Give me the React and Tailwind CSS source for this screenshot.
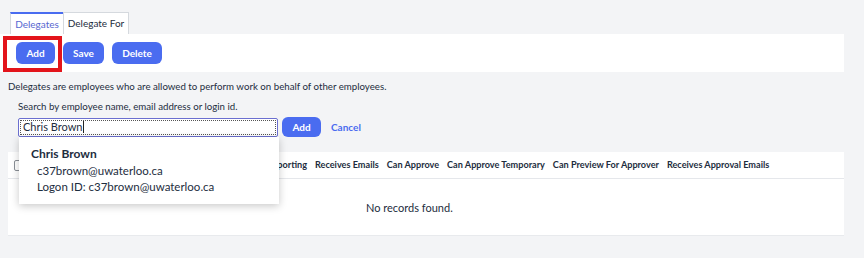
export default function App() {
  const cols = [
    "Receives Emails",
    "Can Approve",
    "Can Approve Temporary",
    "Can Preview For Approver",
    "Receives Approval Emails",
  ];
  return (
    <div className="relative w-[864px] h-[258px] overflow-hidden bg-[#f3f4f6] text-[#1d2d3e] [font-family:Lato,'Liberation_Sans',sans-serif]">
      {/* tabs */}
      <div className="flex pt-3 pl-[10px]">
        <div className="h-[22px] w-[53px] flex items-center justify-center bg-white border-t-2 border-t-[#4a6cf0] border-l border-l-[#d5d9de] text-[10px] text-[#5867d1]">
          Delegates
        </div>
        <div className="h-[22px] w-[66px] flex items-center justify-center bg-white border border-[#d5d9de] border-b-0 text-[10px] text-[#1d2d3e]">
          Delegate For
        </div>
      </div>
      {/* toolbar */}
      <div className="w-[844px] h-[38px] bg-white flex items-center gap-2 pl-4">
        <button className="h-[22px] w-[39px] rounded-[6px] bg-[#4a6cf0] text-white text-[10px] font-bold">Add</button>
        <button className="h-[22px] w-[41px] rounded-[6px] bg-[#4a6cf0] text-white text-[10px] font-bold">Save</button>
        <button className="h-[22px] w-[50px] rounded-[6px] bg-[#4a6cf0] text-white text-[10px] font-bold">Delete</button>
      </div>
      <p className="pl-2 mt-[8px] text-[9.7px] leading-[13px]">
        Delegates are employees who are allowed to perform work on behalf of other employees.
      </p>
      <p className="pl-[18px] mt-[7px] text-[9.7px] leading-[13px]">
        Search by employee name, email address or login id.
      </p>
      <div className="flex items-center pl-[18px] mt-[4px]">
        <div className="w-[260px] h-[19px] border border-[#6b6fd0] rounded-[2px] bg-white p-px">
          <div className="h-full border border-dotted border-[#555] flex items-center pl-[2px] text-[11px]">
            Chris Brown<span className="ml-px inline-block w-px h-[12px] bg-[#222]"></span>
          </div>
        </div>
        <button className="ml-[4px] h-[20px] w-[39px] rounded-[6px] bg-[#4a6cf0] text-white text-[10px] font-bold">Add</button>
        <span className="ml-[10px] text-[10px] font-bold text-[#4a6cf0]">Cancel</span>
      </div>
      {/* table */}
      <div className="ml-2 w-[836px] mt-[15px]">
        <div className="h-[27px] bg-white border-b border-[#e5e7eb] flex items-center pl-[6px] gap-2 text-[9.15px] font-bold">
          <span className="w-[10px] h-[11px] border border-[#8a8f96] rounded-[2px] bg-white shrink-0"></span>
          <span className="w-[275px] text-right shrink-0">Can Use Reporting</span>
          {cols.map((c) => (
            <span key={c}>{c}</span>
          ))}
        </div>
        <div className="h-[57px] bg-white border-b border-[#e8eaed] flex items-center pt-[3px] pl-[358px] text-[11px]">
          No records found.
        </div>
      </div>
      {/* red highlight */}
      <div className="absolute left-[3px] top-[36px] w-[59px] h-[36px] border-4 border-[#e3141b]"></div>
      {/* dropdown */}
      <div className="absolute left-[19px] top-[137px] w-[260px] h-[67px] bg-white shadow-[0_2px_8px_rgba(0,0,0,0.22)] pt-[9px]">
        <div className="pl-[12px] text-[12px] font-bold leading-[16px]">Chris Brown</div>
        <div className="pl-[18px] text-[11.5px] leading-[16px] mt-px">c37brown@uwaterloo.ca</div>
        <div className="pl-[18px] text-[11.5px] leading-[16px]">Logon ID: c37brown@uwaterloo.ca</div>
      </div>
    </div>
  );
}
